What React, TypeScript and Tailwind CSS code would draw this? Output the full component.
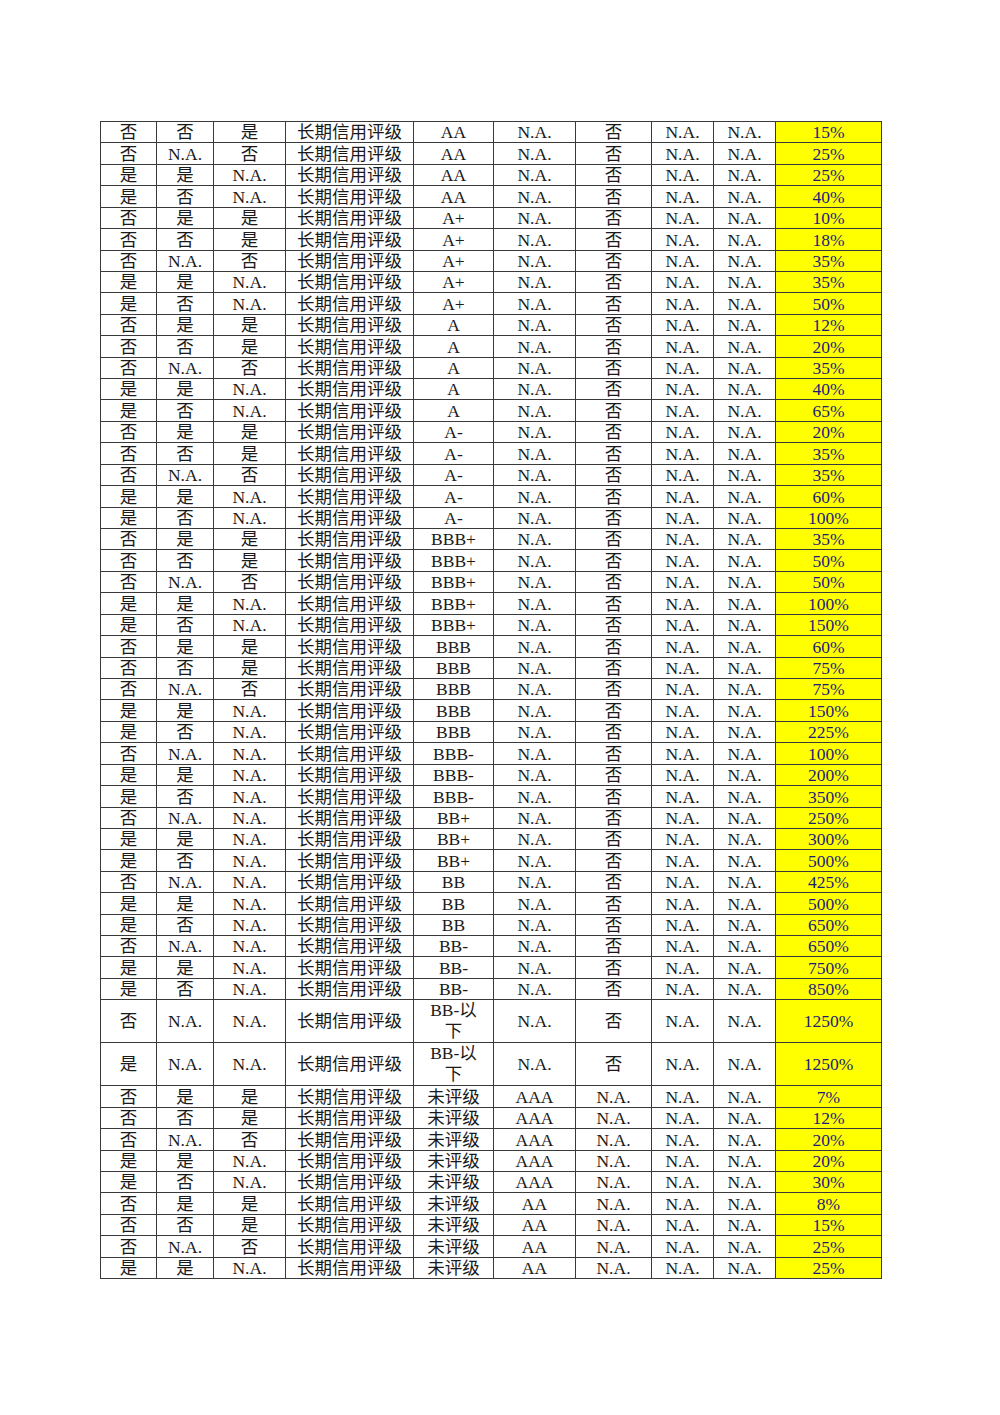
const rows: string[][] = [
  ["否", "否", "是", "AA", "15%"],
  ["否", "N.A.", "否", "AA", "25%"],
  ["是", "是", "N.A.", "AA", "25%"],
  ["是", "否", "N.A.", "AA", "40%"],
  ["否", "是", "是", "A+", "10%"],
  ["否", "否", "是", "A+", "18%"],
  ["否", "N.A.", "否", "A+", "35%"],
  ["是", "是", "N.A.", "A+", "35%"],
  ["是", "否", "N.A.", "A+", "50%"],
  ["否", "是", "是", "A", "12%"],
  ["否", "否", "是", "A", "20%"],
  ["否", "N.A.", "否", "A", "35%"],
  ["是", "是", "N.A.", "A", "40%"],
  ["是", "否", "N.A.", "A", "65%"],
  ["否", "是", "是", "A-", "20%"],
  ["否", "否", "是", "A-", "35%"],
  ["否", "N.A.", "否", "A-", "35%"],
  ["是", "是", "N.A.", "A-", "60%"],
  ["是", "否", "N.A.", "A-", "100%"],
  ["否", "是", "是", "BBB+", "35%"],
  ["否", "否", "是", "BBB+", "50%"],
  ["否", "N.A.", "否", "BBB+", "50%"],
  ["是", "是", "N.A.", "BBB+", "100%"],
  ["是", "否", "N.A.", "BBB+", "150%"],
  ["否", "是", "是", "BBB", "60%"],
  ["否", "否", "是", "BBB", "75%"],
  ["否", "N.A.", "否", "BBB", "75%"],
  ["是", "是", "N.A.", "BBB", "150%"],
  ["是", "否", "N.A.", "BBB", "225%"],
  ["否", "N.A.", "N.A.", "BBB-", "100%"],
  ["是", "是", "N.A.", "BBB-", "200%"],
  ["是", "否", "N.A.", "BBB-", "350%"],
  ["否", "N.A.", "N.A.", "BB+", "250%"],
  ["是", "是", "N.A.", "BB+", "300%"],
  ["是", "否", "N.A.", "BB+", "500%"],
  ["否", "N.A.", "N.A.", "BB", "425%"],
  ["是", "是", "N.A.", "BB", "500%"],
  ["是", "否", "N.A.", "BB", "650%"],
  ["否", "N.A.", "N.A.", "BB-", "650%"],
  ["是", "是", "N.A.", "BB-", "750%"],
  ["是", "否", "N.A.", "BB-", "850%"],
];

const tall: string[][] = [
  ["否", "N.A.", "N.A.", "1250%"],
  ["是", "N.A.", "N.A.", "1250%"],
];

const unrated: string[][] = [
  ["否", "是", "是", "AAA", "7%"],
  ["否", "否", "是", "AAA", "12%"],
  ["否", "N.A.", "否", "AAA", "20%"],
  ["是", "是", "N.A.", "AAA", "20%"],
  ["是", "否", "N.A.", "AAA", "30%"],
  ["否", "是", "是", "AA", "8%"],
  ["否", "否", "是", "AA", "15%"],
  ["否", "N.A.", "否", "AA", "25%"],
  ["是", "是", "N.A.", "AA", "25%"],
];

const td = "border border-[#3a3a3a] p-0 text-center align-bottom";
const pct = "border border-[#3a3a3a] p-0 text-center align-bottom bg-[#ffff00] text-[#1c1c78]";
const mid = "border border-[#3a3a3a] p-0 text-center align-middle";

export default function App() {
  return (
    <div className="w-[1000px] h-[1415px] bg-white pt-[121px] pl-[100px]">
      <table
        className="table-fixed border-collapse text-[17.5px] leading-[20px] text-[#1a1a1a]"
        style={{ fontFamily: '"Liberation Serif", "Noto Sans CJK SC", serif', width: 781 }}
      >
        <colgroup>
          <col className="w-[56px]" />
          <col className="w-[57px]" />
          <col className="w-[72px]" />
          <col className="w-[128px]" />
          <col className="w-[80px]" />
          <col className="w-[82px]" />
          <col className="w-[76px]" />
          <col className="w-[62px]" />
          <col className="w-[62px]" />
          <col className="w-[106px]" />
        </colgroup>
        <tbody>
          {rows.map((r, i) => (
            <tr key={"a" + i} className="h-[21.43px]">
              <td className={td}>{r[0]}</td>
              <td className={td}>{r[1]}</td>
              <td className={td}>{r[2]}</td>
              <td className={td}>长期信用评级</td>
              <td className={td}>{r[3]}</td>
              <td className={td}>N.A.</td>
              <td className={td}>否</td>
              <td className={td}>N.A.</td>
              <td className={td}>N.A.</td>
              <td className={pct}>{r[4]}</td>
            </tr>
          ))}
          {tall.map((r, i) => (
            <tr key={"b" + i} className="h-[42.86px]">
              <td className={mid}>{r[0]}</td>
              <td className={mid}>{r[1]}</td>
              <td className={mid}>{r[2]}</td>
              <td className={mid}>长期信用评级</td>
              <td className={mid + " leading-[21px]"}>
                BB-以
                <br />下
              </td>
              <td className={mid}>N.A.</td>
              <td className={mid}>否</td>
              <td className={mid}>N.A.</td>
              <td className={mid}>N.A.</td>
              <td className={mid + " bg-[#ffff00] text-[#1c1c78]"}>{r[3]}</td>
            </tr>
          ))}
          {unrated.map((r, i) => (
            <tr key={"c" + i} className="h-[21.43px]">
              <td className={td}>{r[0]}</td>
              <td className={td}>{r[1]}</td>
              <td className={td}>{r[2]}</td>
              <td className={td}>长期信用评级</td>
              <td className={td}>未评级</td>
              <td className={td}>{r[3]}</td>
              <td className={td}>N.A.</td>
              <td className={td}>N.A.</td>
              <td className={td}>N.A.</td>
              <td className={pct}>{r[4]}</td>
            </tr>
          ))}
        </tbody>
      </table>
    </div>
  );
}
